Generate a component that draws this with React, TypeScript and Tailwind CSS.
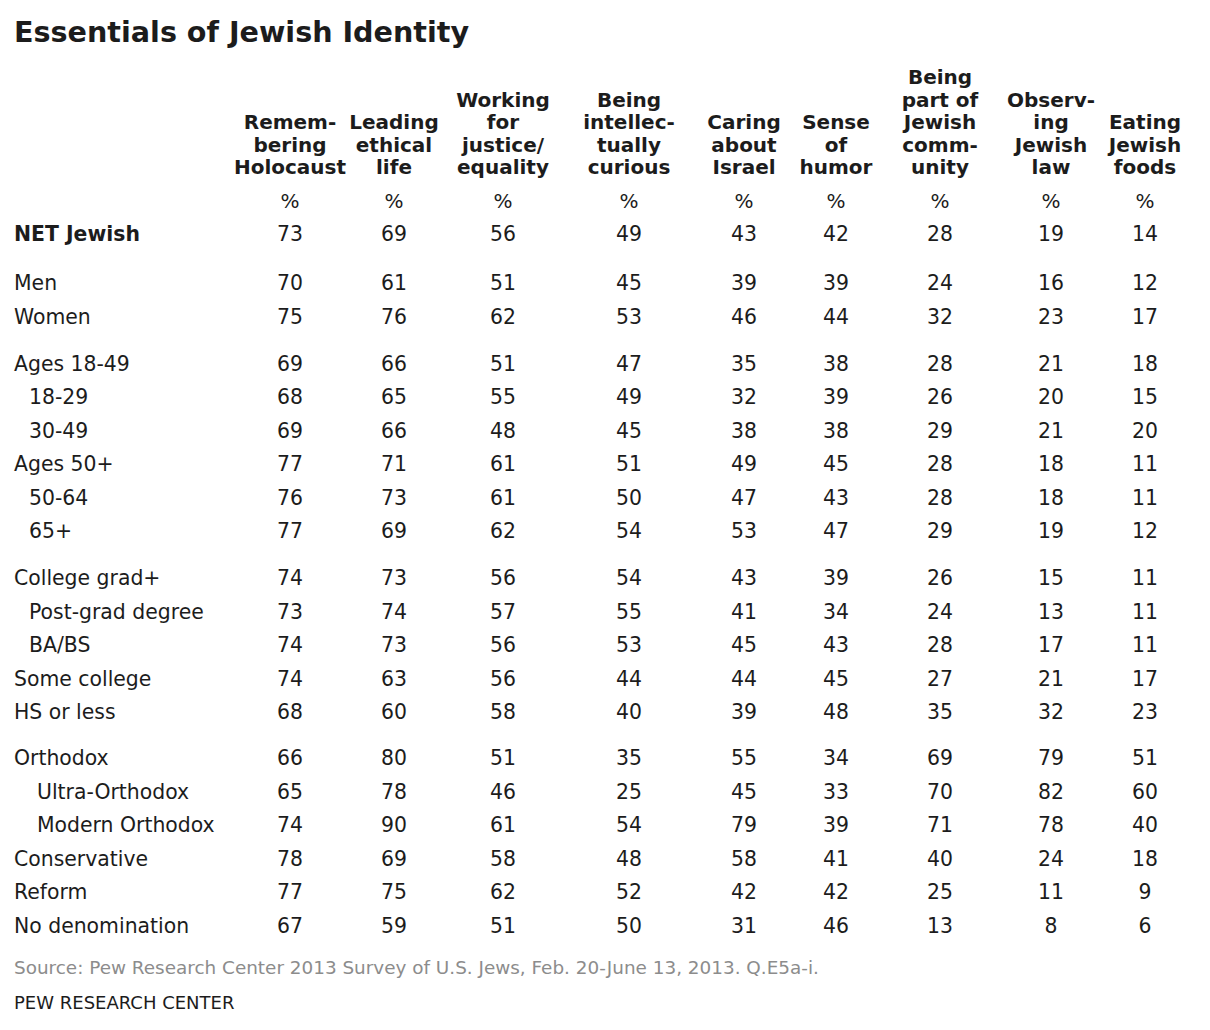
import React from "react";

const headers: string[][] = [
  ["Remem-", "bering", "Holocaust"],
  ["Leading", "ethical", "life"],
  ["Working", "for", "justice/", "equality"],
  ["Being", "intellec-", "tually", "curious"],
  ["Caring", "about", "Israel"],
  ["Sense", "of", "humor"],
  ["Being", "part of", "Jewish", "comm-", "unity"],
  ["Observ-", "ing", "Jewish", "law"],
  ["Eating", "Jewish", "foods"],
];

type Row = { label: string; indent?: number; bold?: boolean; v: number[] };

const groups: { gap: string; rows: Row[] }[] = [
  { gap: "mt-0", rows: [{ label: "NET Jewish", bold: true, v: [73, 69, 56, 49, 43, 42, 28, 19, 14] }] },
  {
    gap: "mt-[15.5px]",
    rows: [
      { label: "Men", v: [70, 61, 51, 45, 39, 39, 24, 16, 12] },
      { label: "Women", v: [75, 76, 62, 53, 46, 44, 32, 23, 17] },
    ],
  },
  {
    gap: "mt-[13.5px]",
    rows: [
      { label: "Ages 18-49", v: [69, 66, 51, 47, 35, 38, 28, 21, 18] },
      { label: "18-29", indent: 1, v: [68, 65, 55, 49, 32, 39, 26, 20, 15] },
      { label: "30-49", indent: 1, v: [69, 66, 48, 45, 38, 38, 29, 21, 20] },
      { label: "Ages 50+", v: [77, 71, 61, 51, 49, 45, 28, 18, 11] },
      { label: "50-64", indent: 1, v: [76, 73, 61, 50, 47, 43, 28, 18, 11] },
      { label: "65+", indent: 1, v: [77, 69, 62, 54, 53, 47, 29, 19, 12] },
    ],
  },
  {
    gap: "mt-[13.5px]",
    rows: [
      { label: "College grad+", v: [74, 73, 56, 54, 43, 39, 26, 15, 11] },
      { label: "Post-grad degree", indent: 1, v: [73, 74, 57, 55, 41, 34, 24, 13, 11] },
      { label: "BA/BS", indent: 1, v: [74, 73, 56, 53, 45, 43, 28, 17, 11] },
      { label: "Some college", v: [74, 63, 56, 44, 44, 45, 27, 21, 17] },
      { label: "HS or less", v: [68, 60, 58, 40, 39, 48, 35, 32, 23] },
    ],
  },
  {
    gap: "mt-[12.5px]",
    rows: [
      { label: "Orthodox", v: [66, 80, 51, 35, 55, 34, 69, 79, 51] },
      { label: "Ultra-Orthodox", indent: 2, v: [65, 78, 46, 25, 45, 33, 70, 82, 60] },
      { label: "Modern Orthodox", indent: 2, v: [74, 90, 61, 54, 79, 39, 71, 78, 40] },
      { label: "Conservative", v: [78, 69, 58, 48, 58, 41, 40, 24, 18] },
      { label: "Reform", v: [77, 75, 62, 52, 42, 42, 25, 11, 9] },
      { label: "No denomination", v: [67, 59, 51, 50, 31, 46, 13, 8, 6] },
    ],
  },
];

const gridCls =
  "grid grid-cols-[220px_112px_96px_122px_130px_100px_84px_124px_98px_90px]";

export default function App() {
  return (
    <div
      className="w-[1210px] h-[1030px] bg-white text-[#1c1c1c] pt-[14px] pl-[14px] overflow-hidden"
      style={{ fontFamily: '"DejaVu Sans", Verdana, sans-serif' }}
    >
      <h1 className="text-[28.6px] leading-[36px] font-bold">Essentials of Jewish Identity</h1>

      <div className={`${gridCls} mt-[16px] items-end`}>
        <div />
        {headers.map((h, i) => (
          <div key={i} className="flex flex-col items-center text-[20px] leading-[22.5px] font-bold">
            {h.map((l, j) => (
              <div key={j} className="whitespace-nowrap">
                {l}
              </div>
            ))}
          </div>
        ))}
      </div>

      <div className={`${gridCls} mt-[6px] h-[33px] items-center text-[20px] leading-[24px]`}>
        <div />
        {headers.map((_, i) => (
          <div key={i} className="text-center">
            %
          </div>
        ))}
      </div>

      {groups.map((g, gi) => (
        <div key={gi} className={g.gap}>
          {g.rows.map((r, ri) => (
            <div key={ri} className={`${gridCls} h-[33.5px] items-center text-[20.4px] leading-[24px]`}>
              <div
                className={`whitespace-nowrap ${r.bold ? "font-bold" : ""} ${
                  r.indent === 1 ? "pl-[15px]" : r.indent === 2 ? "pl-[23px]" : ""
                }`}
              >
                {r.label}
              </div>
              {r.v.map((n, ni) => (
                <div key={ni} className="text-center">
                  {n}
                </div>
              ))}
            </div>
          ))}
        </div>
      ))}

      <div className="mt-[13px] text-[18.4px] leading-[24px] text-[#8c8c8c] whitespace-nowrap">
        Source: Pew Research Center 2013 Survey of U.S. Jews, Feb. 20-June 13, 2013. Q.E5a-i.
      </div>
      <div className="mt-[11px] text-[18px] leading-[24px] whitespace-nowrap">PEW RESEARCH CENTER</div>
    </div>
  );
}
